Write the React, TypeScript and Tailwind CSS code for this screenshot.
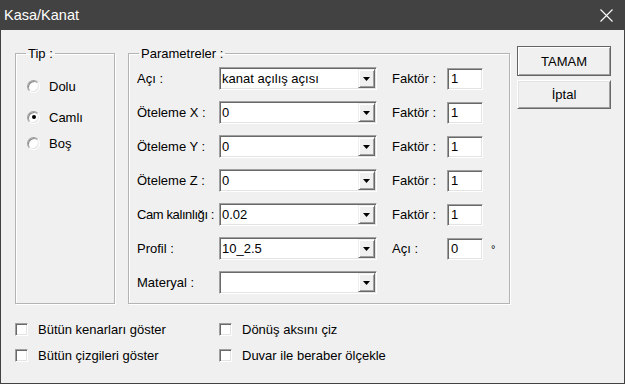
import React from "react";

const SUNKEN =
  "border border-t-[#a0a0a0] border-l-[#a0a0a0] border-r-white border-b-white bg-white shadow-[inset_1px_1px_0_#696969,inset_-1px_-1px_0_#e3e3e3]";

function Combo({ value }: { value: string }) {
  return (
    <div className={`w-[158px] h-[23px] flex p-[1px] ${SUNKEN}`}>
      <div className="flex-1 flex items-center pl-[1px] text-[13px] leading-none whitespace-nowrap overflow-hidden">
        {value}
      </div>
      <div className="w-[17px] h-full flex items-center justify-center bg-[#f0f0f0] border border-t-[#f0f0f0] border-l-[#f0f0f0] border-r-[#696969] border-b-[#696969] shadow-[inset_1px_1px_0_#fff,inset_-1px_-1px_0_#a0a0a0]">
        <svg width="7" height="4" viewBox="0 0 7 4">
          <path d="M0 0H7L3.5 4Z" fill="#000" />
        </svg>
      </div>
    </div>
  );
}

function Edit({ value }: { value: string }) {
  return (
    <div className={`w-[36px] h-[22px] flex items-center pl-[3px] text-[13px] leading-none ${SUNKEN}`}>
      {value}
    </div>
  );
}

function Row({
  label,
  value,
  right,
  rightValue,
  degree,
  tight,
}: {
  label: string;
  value: string;
  right?: string;
  rightValue?: string;
  degree?: boolean;
  tight?: boolean;
}) {
  return (
    <div className="flex items-center h-[23px]">
      <div className={`w-[82px] text-[13px] leading-none whitespace-nowrap ${tight ? "tracking-[-0.4px]" : ""}`}>
        {label}
      </div>
      <Combo value={value} />
      {right && (
        <>
          <div className="ml-[15px] w-[55px] text-[13px] leading-none whitespace-nowrap">{right}</div>
          <Edit value={rightValue ?? ""} />
          {degree && <div className="ml-[8px] text-[11px] leading-none translate-y-[1px]">°</div>}
        </>
      )}
    </div>
  );
}

function Radio({ label, checked }: { label: string; checked?: boolean }) {
  return (
    <div className="flex items-center h-[16px]">
      <div className="w-[13px] h-[13px] rounded-full flex items-center justify-center border border-t-[#a0a0a0] border-l-[#a0a0a0] border-r-white border-b-white bg-white shadow-[inset_1px_1px_0_#8a8a8a,inset_-1px_-1px_0_#e3e3e3]">
        {checked && <div className="w-[4px] h-[4px] rounded-full bg-black" />}
      </div>
      <span className="ml-[9px] text-[13px] leading-none">{label}</span>
    </div>
  );
}

function Check({ label }: { label: string }) {
  return (
    <div className="flex items-center h-[16px]">
      <div className={`w-[13px] h-[13px] ${SUNKEN}`} />
      <span className="ml-[10px] text-[13px] leading-none whitespace-nowrap">{label}</span>
    </div>
  );
}

export default function App() {
  return (
    <div className="w-[625px] h-[384px] bg-[#424242] flex flex-col font-['Liberation_Sans',Arial,sans-serif] text-black">
      <div className="h-[30px] flex items-center justify-between pl-[4px] pr-[12px] text-white">
        <span className="text-[14.5px] leading-none">Kasa/Kanat</span>
        <svg width="13" height="13" viewBox="0 0 13 13">
          <path d="M0.5 0.5L12.5 12.5M12.5 0.5L0.5 12.5" stroke="#fff" strokeWidth="1.1" />
        </svg>
      </div>
      <div className="flex-1 mx-[1px] mb-[1px] bg-[#f0f0f0] flex flex-col">
        <div className="flex items-start mt-[16px]">
          <fieldset className="ml-[14px] w-[100px] h-[258px] border border-[#b4b4b4] shadow-[inset_1px_1px_0_#fff,1px_1px_0_#fff] pl-[11px]">
            <legend className="ml-[-1px] px-[2px] text-[13px] leading-[15px]">Tip :</legend>
            <div className="flex flex-col pt-[17px]">
              <Radio label="Dolu" />
              <div className="mt-[15px]">
                <Radio label="Camlı" checked />
              </div>
              <div className="mt-[10px]">
                <Radio label="Boş" />
              </div>
            </div>
          </fieldset>
          <fieldset className="ml-[13px] w-[382px] h-[258px] border border-[#b4b4b4] shadow-[inset_1px_1px_0_#fff,1px_1px_0_#fff] pl-[8px]">
            <legend className="ml-[2px] px-[2px] text-[13px] leading-[15px]">Parametreler :</legend>
            <div className="flex flex-col gap-[11px] pt-[6px]">
              <Row label="Açı :" value="kanat açılış açısı" right="Faktör :" rightValue="1" />
              <Row label="Öteleme X :" value="0" right="Faktör :" rightValue="1" />
              <Row label="Öteleme Y :" value="0" right="Faktör :" rightValue="1" />
              <Row label="Öteleme Z :" value="0" right="Faktör :" rightValue="1" />
              <Row label="Cam kalınlığı :" value="0.02" right="Faktör :" rightValue="1" tight />
              <Row label="Profil :" value="10_2.5" right="Açı :" rightValue="0" degree />
              <Row label="Materyal :" value="" />
            </div>
          </fieldset>
          <div className="ml-[7px] flex flex-col">
            <button className="w-[94px] h-[30px] border border-[#646464] bg-[#f0f0f0] text-[13px] leading-none shadow-[inset_1px_1px_0_#fff,inset_-1px_-1px_0_#a0a0a0]">
              TAMAM
            </button>
            <button className="mt-[4px] w-[94px] h-[29px] border border-t-white border-l-white border-r-[#696969] border-b-[#696969] bg-[#f0f0f0] text-[13px] leading-none shadow-[inset_1px_1px_0_#e3e3e3,inset_-1px_-1px_0_#a0a0a0]">
              İptal
            </button>
          </div>
        </div>
        <div className="mt-[17px] ml-[14px] grid grid-cols-[204px_auto] gap-y-[10px]">
          <Check label="Bütün kenarları göster" />
          <Check label="Dönüş aksını çiz" />
          <Check label="Bütün çizgileri göster" />
          <Check label="Duvar ile beraber ölçekle" />
        </div>
      </div>
    </div>
  );
}
